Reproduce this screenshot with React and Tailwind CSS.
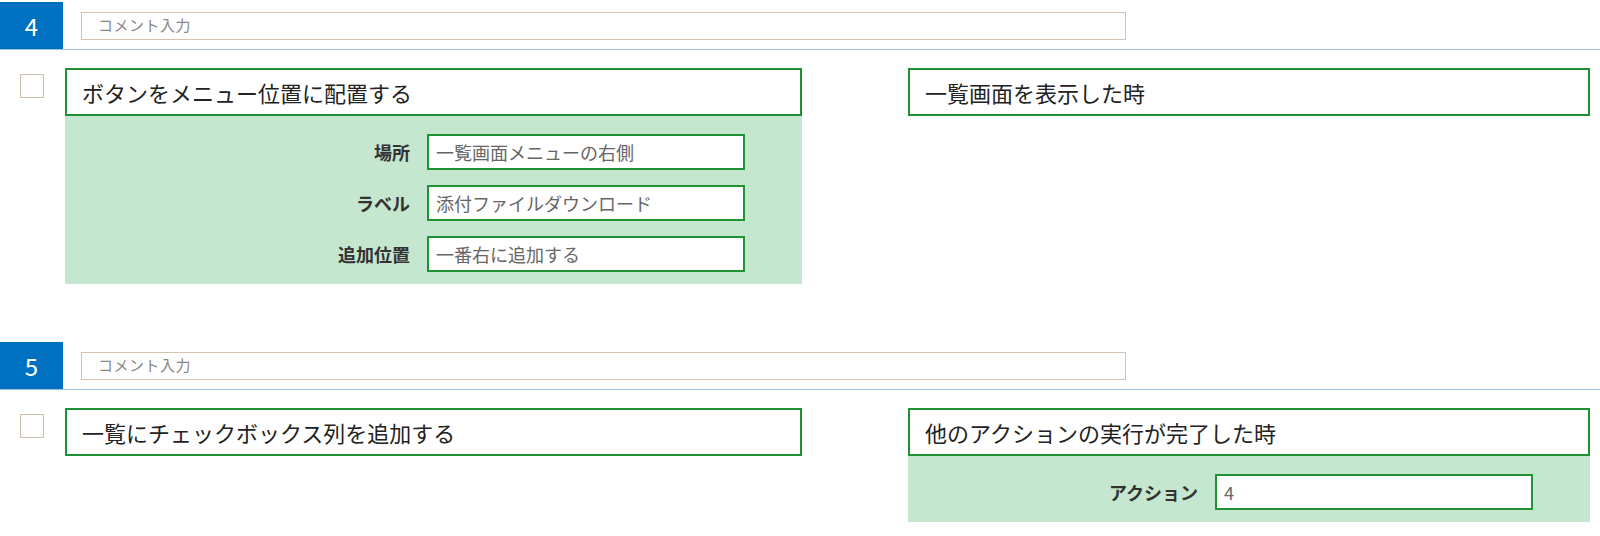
import React from 'react';

const sections = [
  {
    no: 4,
    action: 'ボタンをメニュー位置に配置する',
    actionFields: [
      { label: '場所', value: '一覧画面メニューの右側' },
      { label: 'ラベル', value: '添付ファイルダウンロード' },
      { label: '追加位置', value: '一番右に追加する' },
    ],
    trigger: '一覧画面を表示した時',
    triggerFields: [],
  },
  {
    no: 5,
    action: '一覧にチェックボックス列を追加する',
    actionFields: [],
    trigger: '他のアクションの実行が完了した時',
    triggerFields: [{ label: 'アクション', value: '4' }],
  },
];

const FieldPanel = ({ fields }) => (
  <div className="bg-[#c5e6cf] pt-[18px] pb-[12px] pr-[57px] flex flex-col gap-[15px]">
    {fields.map((f) => (
      <div key={f.label} className="flex items-center justify-end">
        <span className="text-[18px] font-bold text-[#333] mr-[17px] leading-none">{f.label}</span>
        <div className="w-[318px] h-[36px] bg-white border-2 border-[#1f9233] flex items-center pl-[7px] text-[18px] text-[#666] leading-none">
          {f.value}
        </div>
      </div>
    ))}
  </div>
);

const TitleBox = ({ text }) => (
  <div className="h-[48px] border-2 border-[#1f9233] bg-white flex items-center pl-[15px] text-[22px] text-[#222] leading-none">
    {text}
  </div>
);

const Section = ({ s }) => (
  <div className="pt-[2px] mb-[56px]">
    <div className="flex items-center h-[48px] border-b border-[#9dbfe0]">
      <div className="w-[63px] h-full bg-[#0070c0] text-white text-[24px] flex items-center justify-center">
        {s.no}
      </div>
      <div className="ml-[18px] w-[1045px] h-[28px] border border-[#d3c3b0] flex items-center pl-[16px] text-[15px] text-[#888] tracking-[0.5px]">
        コメント入力
      </div>
    </div>
    <div className="flex pt-[18px]">
      <div className="flex w-[802px]">
        <div className="ml-[20px] mt-[6px] w-[24px] h-[24px] border border-[#cdbdab] bg-white shrink-0" />
        <div className="ml-[21px] w-[737px]">
          <TitleBox text={s.action} />
          {s.actionFields.length > 0 && <FieldPanel fields={s.actionFields} />}
        </div>
      </div>
      <div className="ml-[106px] w-[682px]">
        <TitleBox text={s.trigger} />
        {s.triggerFields.length > 0 && <FieldPanel fields={s.triggerFields} />}
      </div>
    </div>
  </div>
);

export default function App() {
  return (
    <div className="w-[1600px] h-[536px] overflow-hidden bg-white font-['Noto_Sans_CJK_JP',sans-serif]">
      {sections.map((s) => (
        <Section key={s.no} s={s} />
      ))}
    </div>
  );
}
